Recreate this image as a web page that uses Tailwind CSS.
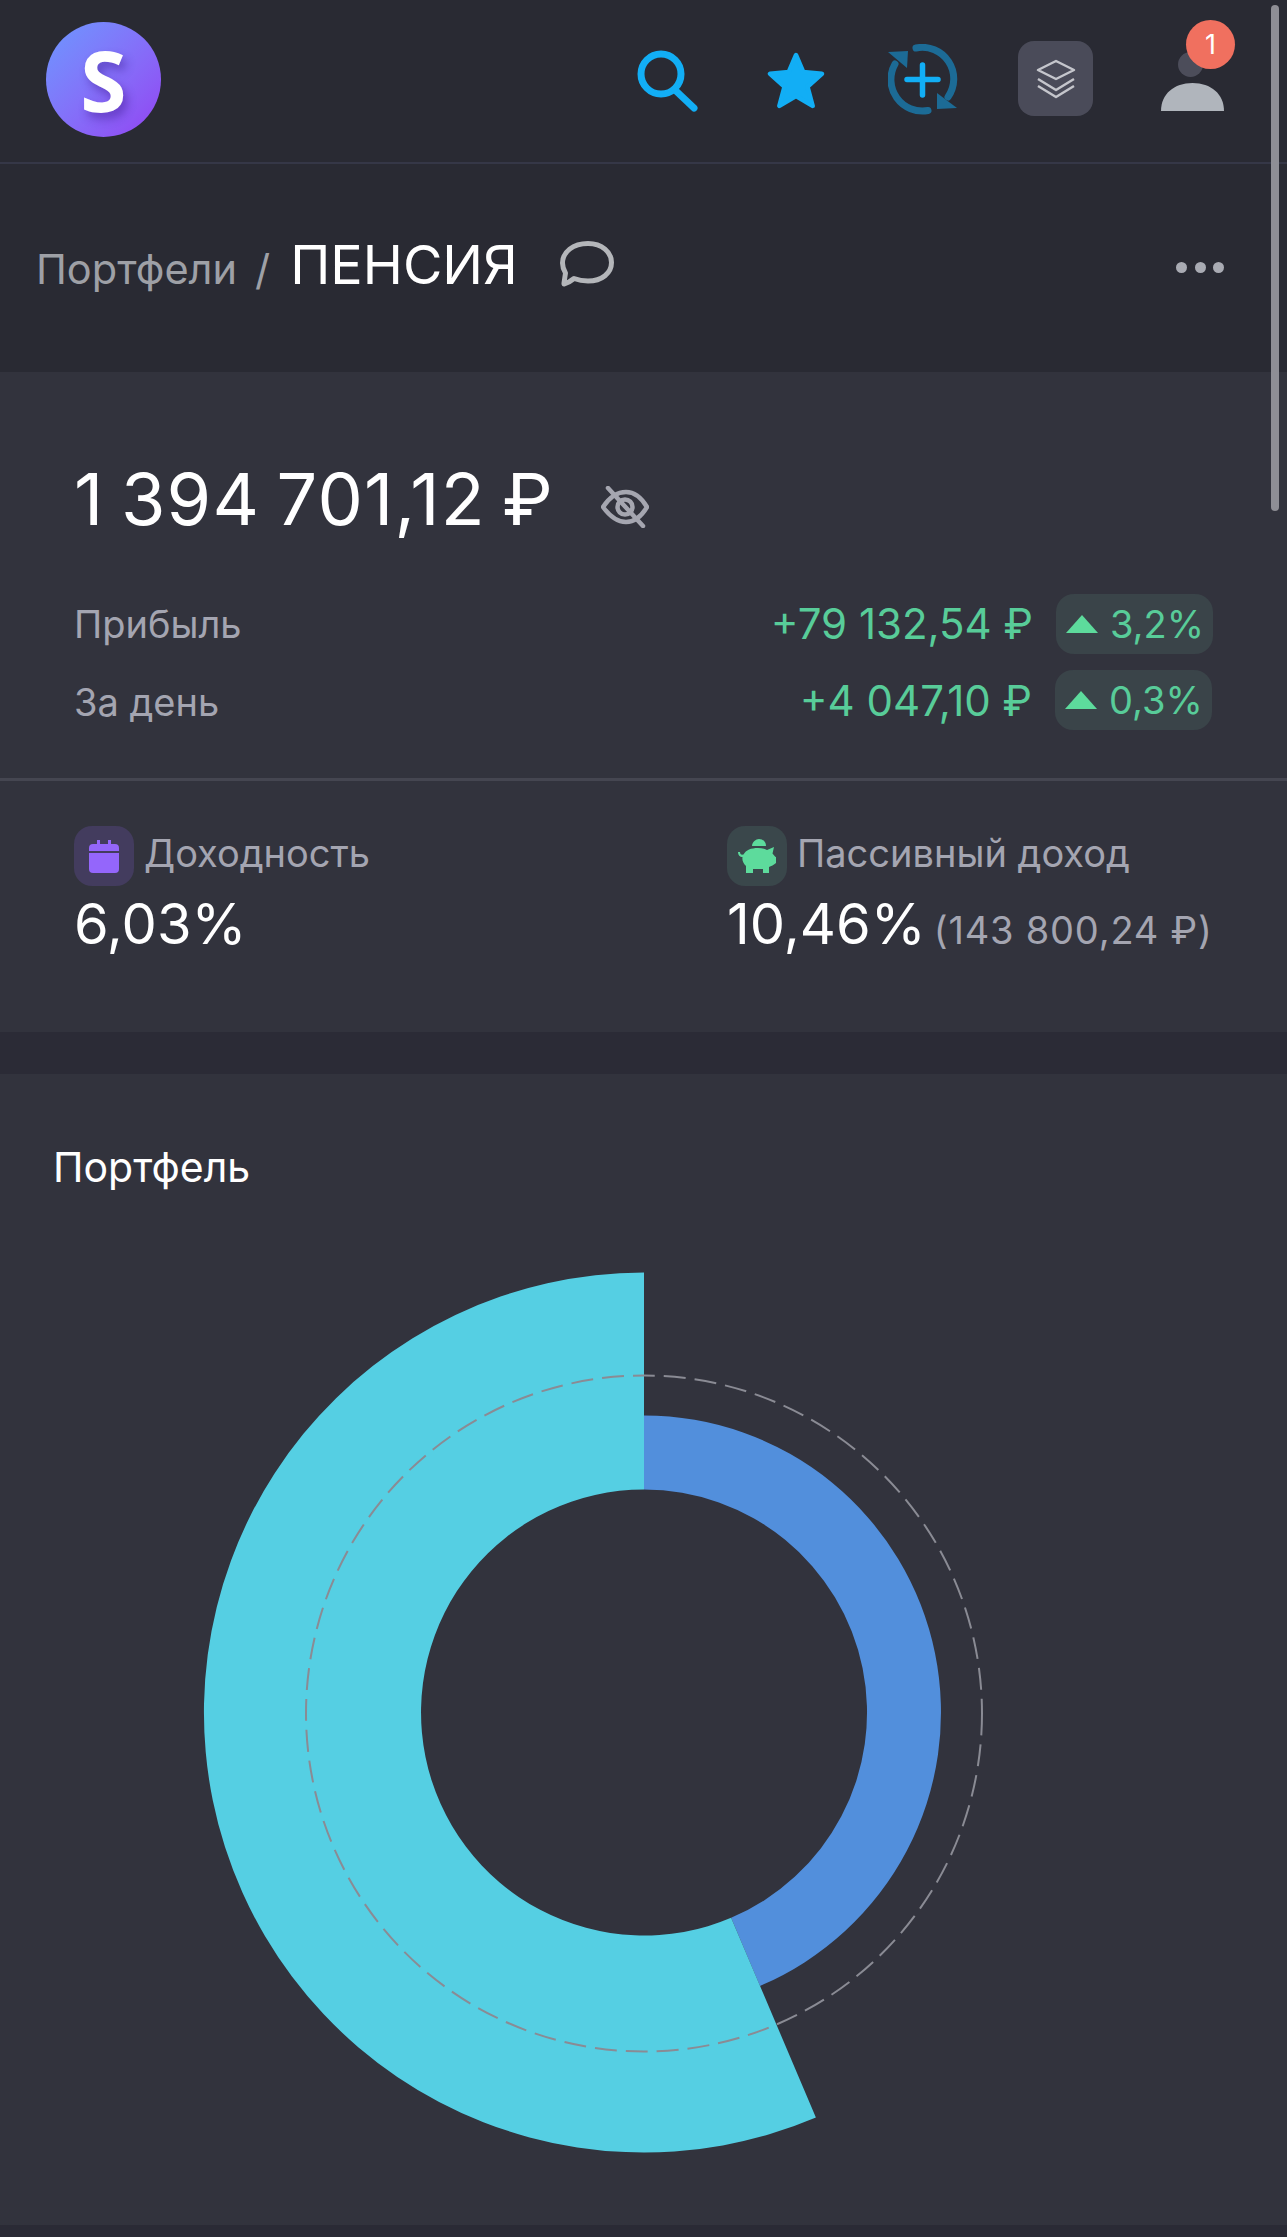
<!DOCTYPE html>
<html lang="ru">
<head>
<meta charset="utf-8">
<script src="https://cdn.jsdelivr.net/npm/@tailwindcss/browser@4"></script>
</head>
<body class="bg-[#2a2a35] font-['Inter',sans-serif]">
<div class="relative w-[1287px] h-[2237px] overflow-hidden">
  <header class="flex items-center h-[164px] pl-[46px] pr-[63px] bg-[#292a33] border-b-2 border-[#353747]">
    <div class="relative flex items-center justify-center w-[115px] h-[115px] mb-[3px] rounded-full bg-gradient-to-br from-[#6a97ff] to-[#9140f2]">
      <span class="font-['Open_Sans',sans-serif] font-bold text-[84px] leading-none text-white [text-shadow:4px_6px_10px_rgba(60,20,140,0.45)]">S</span>
    </div>
    <div class="ml-auto flex items-center mb-[5px]">
      <svg class="w-[62px] h-[62px] mt-[5px]" viewBox="0 0 62 62" fill="none" stroke="#12aef5" stroke-linecap="round"><circle cx="24" cy="24" r="20" stroke-width="7"/><path d="M38 40 L57 58" stroke-width="7"/></svg>
      <svg class="w-[58px] h-[58px] ml-[68px] mt-[5px]" viewBox="0 0 56 56"><path d="M28 3 L35 19.500 L53 21 L39 33.500 L44 52 L28 42.500 L12 52 L17 33.500 L3 21 L21 19.500 Z" fill="#12aef5" stroke="#12aef5" stroke-width="4.500" stroke-linejoin="round"/></svg>
      <svg class="w-[70px] h-[72px] ml-[63px] mt-[2px]" viewBox="0 0 70 72" fill="none">
        <path d="M28 4 A31.500 31.500 0 0 1 60 53" stroke="#1c6b96" stroke-width="7" stroke-linecap="round"/>
        <path d="M40 66.500 A31.500 31.500 0 0 1 7 20" stroke="#1c6b96" stroke-width="7" stroke-linecap="round"/>
        <path d="M49 49 L49 65 L69 64 Z" fill="#1c6b96"/>
        <path d="M0 8 L20 7 L19 24 Z" fill="#1c6b96"/>
        <path d="M19 35.500 H50 M34.500 21 V51" stroke="#12aef5" stroke-width="5.500" stroke-linecap="round"/>
      </svg>
      <div class="flex items-center justify-center w-[75px] h-[75px] ml-[60px] rounded-[16px] bg-[#4a4b59]">
        <svg class="w-[40px] h-[40px]" viewBox="0 0 40 40" fill="none" stroke="#c5c6cc" stroke-width="2.500" stroke-linejoin="round"><path d="M20 2 L38 11 L20 20 L2 11 Z"/><path d="M2 20 L20 31 L38 20"/><path d="M2 27 L20 38 L38 27"/></svg>
      </div>
      <div class="relative w-[63px] h-[72px] ml-[68px] mb-[7px]">
        <svg class="w-[63px] h-[72px]" viewBox="0 0 63 72"><circle cx="29.500" cy="25.500" r="12.500" fill="#4c4d5a"/><path d="M0 72 C0 55 13 44 31.500 44 C50 44 63 55 63 72 Z" fill="#b0b5bc"/></svg>
        <div class="absolute left-[25px] top-[-19px] flex items-center justify-center w-[49px] h-[49px] rounded-full bg-[#f0705f] text-white text-[27px] leading-none">1</div>
      </div>
    </div>
  </header>

  <section class="flex items-center h-[208px] pl-[36px] pr-[63px] bg-[#292a33]">
    <span class="text-[#9ea0a6] text-[41.500px] leading-none mt-[4px]">Портфели</span>
    <span class="text-[#9ea0a6] text-[42px] leading-none mt-[4px] ml-[18px]">/</span>
    <span class="text-white text-[54px] leading-none ml-[20px] mb-[7px]">ПЕНСИЯ</span>
    <svg class="w-[54px] h-[46px] ml-[42px] mb-[8px]" viewBox="0 0 54 46" fill="none"><path d="M4 42 L5.500 32 C3 28 2.500 25 2.500 22 C2.500 11 13 2.500 28 2.500 C42 2.500 51.500 11 51.500 21.500 C51.500 32 42 40 28 40 C23 40 18 39 14 37.500 C11 40 8 42 4 43 Z" stroke="#b4b6ba" stroke-width="5" stroke-linejoin="round"/></svg>
    <div class="ml-auto flex items-center gap-[7.500px] mb-[2px]">
      <span class="w-[11px] h-[11px] rounded-full bg-[#a9abb3]"></span>
      <span class="w-[11px] h-[11px] rounded-full bg-[#a9abb3]"></span>
      <span class="w-[11px] h-[11px] rounded-full bg-[#a9abb3]"></span>
    </div>
  </section>

  <section class="h-[660px] bg-[#32333d]">
    <div class="flex items-center pt-[91px] pl-[74px]">
      <span class="text-white text-[72px] leading-none tracking-[1.2px] [word-spacing:-5px]">1 394 701,12 ₽</span>
      <svg class="w-[48px] h-[42px] ml-[47px] mt-[16px]" viewBox="0 0 48 42" fill="none" stroke="#a5a6b0" stroke-width="4.500" stroke-linecap="round"><path d="M2 21 C10 9 18 6 25 6 C33 6 40 11 46 21 C40 31 33 36 25 36 C18 36 10 32 2 21 Z"/><circle cx="24" cy="21" r="7.500"/><path d="M7 2 L42 40"/></svg>
    </div>
    <div class="flex items-center justify-between h-[60px] mt-[59px] pl-[74px] pr-[74px]">
      <span class="text-[#a4a5b1] text-[38px] leading-none">Прибыль</span>
      <div class="flex items-center gap-[23px]">
        <span class="text-[#58cc99] text-[42px] leading-none">+79 132,54 ₽</span>
        <div class="flex items-center w-[157px] h-[60px] pl-[10px] rounded-[18px] bg-[#3a4449]">
          <svg class="w-[32px] h-[18px]" viewBox="0 0 32 18"><path d="M16 0 L32 18 H0 Z" fill="#5ddb9c"/></svg>
          <span class="ml-[12px] text-[#58cc99] text-[38px] leading-none">3,2%</span>
        </div>
      </div>
    </div>
    <div class="flex items-center justify-between h-[60px] mt-[16px] pl-[74px] pr-[75px]">
      <span class="text-[#a4a5b1] text-[38px] leading-none mt-[3px]">За день</span>
      <div class="flex items-center gap-[23px]">
        <span class="text-[#58cc99] text-[42px] leading-none mt-[2px]">+4 047,10 ₽</span>
        <div class="flex items-center w-[157px] h-[60px] pl-[10px] rounded-[18px] bg-[#3a4449]">
          <svg class="w-[32px] h-[18px]" viewBox="0 0 32 18"><path d="M16 0 L32 18 H0 Z" fill="#5ddb9c"/></svg>
          <span class="ml-[12px] text-[#58cc99] text-[38px] leading-none">0,3%</span>
        </div>
      </div>
    </div>
    <div class="h-[3px] mt-[48px] bg-[#454651]"></div>
    <div class="flex pt-[45px]">
      <div class="w-[652px] pl-[74px]">
        <div class="flex items-center gap-[10px]">
          <div class="flex items-center justify-center w-[60px] h-[60px] rounded-[18px] bg-[#433c5e]">
            <svg class="w-[30px] h-[33px]" viewBox="0 0 30 33" fill="#9466fb"><path d="M8 0 H11 V4 H19 V0 H22 V4 H26 A4 4 0 0 1 30 8 V11 H0 V8 A4 4 0 0 1 4 4 H8 Z"/><path d="M0 13 H30 V29 A4 4 0 0 1 26 33 H4 A4 4 0 0 1 0 29 Z"/></svg>
          </div>
          <span class="text-[#a4a5b1] text-[38px] leading-none mb-[7px]">Доходность</span>
        </div>
        <div class="mt-[10px] text-white text-[56px] leading-none">6,03%</div>
      </div>
      <div class="pl-[75px]">
        <div class="flex items-center gap-[10px]">
          <div class="flex items-center justify-center w-[60px] h-[60px] rounded-[18px] bg-[#3a474b]">
            <svg class="w-[38px] h-[34px]" viewBox="0 0 38 34" fill="#5ddb9c"><path d="M14 7 C14 3 18 0 21 0 C25 0 28 3 28 7 Z"/><path d="M8 34 V27 C5 24 4 21 4.500 18 C2 18 0 16 0 13 L2 13 C2 15 3 16 5.500 15.500 C8 11 13 9 20 9 C24 9 27 10 29 11 L36 8 L34.500 14.500 C36 16 37 18 38 18 V24 C36 26 33 27 31 28 V34 H25 V30 H15 V34 Z"/></svg>
          </div>
          <span class="text-[#a4a5b1] text-[38px] leading-none mb-[7px]">Пассивный доход</span>
        </div>
        <div class="flex items-baseline mt-[10px]">
          <span class="text-white text-[56px] leading-none">10,46%</span>
          <span class="ml-[8px] text-[#a4a5b1] text-[38px] leading-none tracking-[0.8px]">(143 800,24 ₽)</span>
        </div>
      </div>
    </div>
  </section>

  <div class="h-[42px] bg-[#2b2b36]"></div>

  <section class="relative h-[1151px] bg-[#32333d]">
    <h2 class="pt-[73px] pl-[53px] text-white text-[41px] leading-none font-normal">Портфель</h2>
    <svg class="absolute left-[200px] top-[196px] w-[800px] h-[886px]" viewBox="200 1270 800 886" fill="none">
      <path d="M644 1415.500 A297 297 0 0 1 760 1985.900 L731.100 1917.800 A223 223 0 0 0 644 1489.500 Z" fill="#528fdc"/>
      <path d="M644 1272.500 A440 440 0 1 0 815.900 2117.500 L731.100 1917.800 A223 223 0 1 1 644 1489.500 Z" fill="#55cfe3"/>
      <circle cx="644" cy="1713.500" r="338" stroke="#8a8b94" stroke-width="2" stroke-dasharray="22 9"/>
    </svg>
  </section>

  <div class="absolute left-[1271px] top-[5px] w-[8px] h-[506px] rounded-full bg-[#8e8e95]"></div>
</div>
</body>
</html>
